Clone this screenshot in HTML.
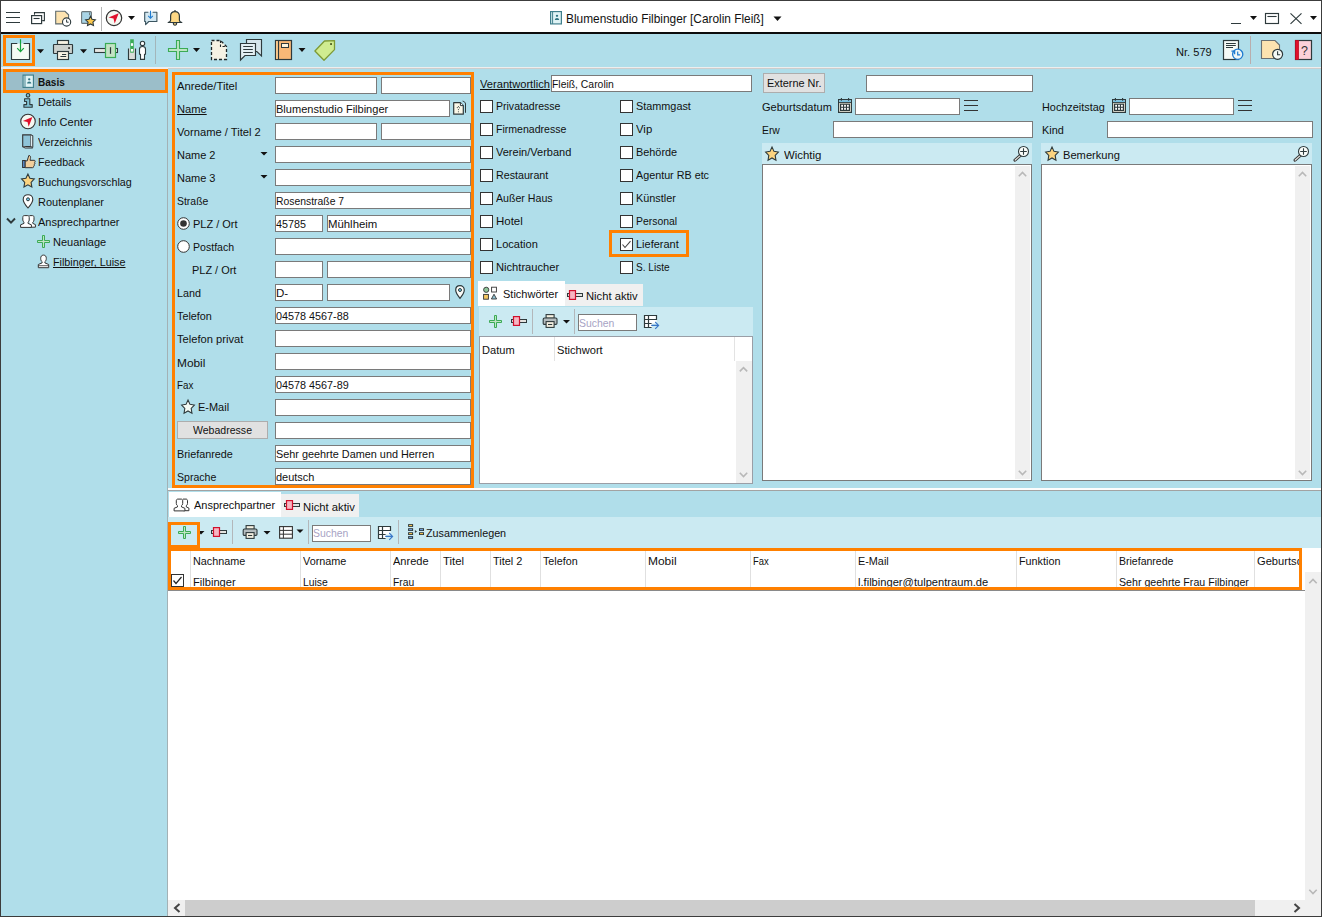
<!DOCTYPE html>
<html lang="de"><head><meta charset="utf-8"><title>Blumenstudio Filbinger</title>
<style>
html,body{margin:0;padding:0;background:#B0DEEA;}
body{width:1322px;height:917px;position:relative;overflow:hidden;font-family:"Liberation Sans",sans-serif;}
.a{position:absolute;box-sizing:content-box;}
.t{position:absolute;white-space:nowrap;line-height:14px;transform-origin:0 50%;}
svg{overflow:visible;}
</style></head><body>
<div class="a" style="left:0;top:0;width:1322px;height:917px;background:#B0DEEA"></div>
<div class="a" style="left:0px;top:0px;width:1322px;height:34px;background:#fff;"></div>
<div class="a" style="left:0px;top:32px;width:1322px;height:2px;background:#0c0c0c;"></div>
<div class="a" style="left:1px;top:67px;width:1320px;height:1px;background:#eeeeee;"></div>
<div class="a" style="left:1px;top:68px;width:167px;height:1px;background:#eeeeee;"></div>
<div class="a" style="left:168px;top:68px;width:1153px;height:1px;background:#cdcdcd;"></div>
<div class="a" style="left:167px;top:93px;width:1px;height:823px;background:#a3b1b5;"></div>
<svg class="a" style="left:6px;top:11px" width="14" height="13"><g transform="translate(0 0.5)"><path d="M0 1H14M0 6H14M0 11H14" stroke="#2e3a3c" stroke-width="1.2"/></g></svg>
<svg class="a" style="left:31px;top:11px" width="15" height="14"><path d="M3.5 3.2V1.6H13.4V9.6H11.6" fill="none" stroke="#2e3a3c" stroke-width="1.1" stroke-linecap="round"/><rect x=".6" y="4.6" width="10" height="8" fill="#fff" stroke="#2e3a3c" stroke-width="1.2"/><path d="M2.6 7.5H8.6" stroke="#2e3a3c" stroke-width="1.1"/></svg>
<svg class="a" style="left:55px;top:10px" width="17" height="17"><g transform="translate(0 0.6)"><path d="M.7 .7H10L13.6 4.2V13.3H.7Z" fill="#fde3b0" stroke="#5d6a6d" stroke-width="1.1"/><circle cx="11.6" cy="11.4" r="4.1" fill="#fff" stroke="#2e3a3c" stroke-width="1.1"/><path d="M11.6 9V11.6H13.6" fill="none" stroke="#2e3a3c" stroke-width="1"/></g></svg>
<svg class="a" style="left:80px;top:10px" width="17" height="17"><rect x="1.6" y="1.6" width="9.8" height="11.8" rx="1" fill="#a8d4e6" stroke="#6a7578" stroke-width="1.1"/><path d="M9.6 2.4V5.2" stroke="#6a7578" stroke-width="1"/></svg>
<svg class="a" style="left:82px;top:13px" width="17" height="18"><g transform="translate(0.5 0.4)"><path d="M8.00 2.90L9.50 5.94L12.85 6.42L10.43 8.79L11.00 12.13L8.00 10.55L5.00 12.13L5.57 8.79L3.15 6.42L6.50 5.94Z" fill="#fcc84e" stroke="#2e3a3c" stroke-width="1.1" stroke-linejoin="miter"/></g></svg>
<div class="a" style="left:101px;top:7px;width:1px;height:24px;background:#b4b4b4;"></div>
<svg class="a" style="left:105px;top:9px" width="18" height="18"><g transform="translate(0.5 0.5) scale(1.0000 1.0000)"><circle cx="8.5" cy="8.5" r="7.7" fill="#f6f8f2" stroke="#333" stroke-width="1.2"/><path d="M13.2 3.8L3 8L8 9.1L9.2 14Z" fill="#e0102c"/></g></svg>
<svg class="a" style="left:128px;top:16px" width="7" height="4"><path d="M0 0H7L3.5 4Z" fill="#111"/></svg>
<svg class="a" style="left:144px;top:10px" width="14" height="16"><g transform="translate(0 0.5)"><path d="M4.4 1.7H.7V11H1.6V14.2L4.8 11H12.9V1.7H8.6" fill="#d4e8f1" stroke="#3b5560" stroke-width="1.1" stroke-linejoin="round"/><path d="M6.5 .3V7.6M4.2 5.4L6.5 7.8L8.8 5.4" fill="none" stroke="#1f7bd0" stroke-width="1.1"/></g></svg>
<svg class="a" style="left:167px;top:9px" width="16" height="18"><circle cx="8" cy="1.7" r=".8" fill="#2e3a3c"/><path d="M6.3 13.8C6.3 17 9.7 17 9.7 13.8Z" fill="#fdd884" stroke="#2e3a3c" stroke-width="1.1"/><path d="M8 2.6C5 2.6 3.6 4.6 3.6 7V11.2C3.6 12.4 2.6 13 1.2 13.5H14.8C13.4 13 12.4 12.4 12.4 11.2V7C12.4 4.6 11 2.6 8 2.6Z" fill="#fdd884" stroke="#2e3a3c" stroke-width="1.2" stroke-linejoin="round"/></svg>
<svg class="a" style="left:550px;top:11px" width="12" height="14"><g transform="translate(0 0) scale(1.0000 0.9643)"><rect x=".6" y=".6" width="10.8" height="12.8" fill="#dff3f5" stroke="#3f7f8c" stroke-width="1.2"/><path d="M2.6 .6V13.4" stroke="#3f7f8c" stroke-width="1"/><circle cx="7" cy="5" r="1.2" fill="#2f7380"/><path d="M4.8 9.4C4.8 6.6 9.2 6.6 9.2 9.4Z" fill="#2f7380"/></g></svg>
<div class="t" style="left:565.9px;top:12px;font-size:13px;color:#111;transform:scaleX(0.9130);">Blumenstudio Filbinger [Carolin Fleiß]</div>
<svg class="a" style="left:773px;top:16px" width="9" height="5"><g transform="translate(0.5 0.5)"><path d="M0 0H8L4.0 4.5Z" fill="#111"/></g></svg>
<div class="a" style="left:1231px;top:23px;width:10px;height:1px;background:#2e3a3c;"></div>
<svg class="a" style="left:1250px;top:16px" width="7" height="4"><path d="M0 0H7L3.5 4Z" fill="#111"/></svg>
<svg class="a" style="left:1265px;top:13px" width="14" height="11"><rect x=".5" y=".5" width="13" height="10" fill="none" stroke="#2e3a3c" stroke-width="1.15"/><path d="M2.4 3.5H11.6" stroke="#2e3a3c" stroke-width="1.1"/></svg>
<svg class="a" style="left:1290px;top:13px" width="12" height="11"><path d="M.5 .3L11.5 10.8M11.5 .3L.5 10.8" stroke="#2e3a3c" stroke-width="1.15"/></svg>
<svg class="a" style="left:1310px;top:16px" width="7" height="4"><path d="M0 0H7L3.5 4Z" fill="#111"/></svg>
<div class="a" style="left:3px;top:35px;width:26px;height:25px;border:3px solid #FF8000;"></div>
<svg class="a" style="left:11px;top:39px" width="20" height="21"><path d="M6.3 4.5H.5V20.5H18.5V4.5H12.6" fill="#f4faf4" stroke="#2e3a3c" stroke-width="1.15"/><path d="M9.5 .2V12.4M6.2 9.2L9.5 12.7L12.8 9.2" fill="none" stroke="#14a23a" stroke-width="1.2"/></svg>
<svg class="a" style="left:37px;top:49px" width="7" height="5"><g transform="translate(0 0.2)"><path d="M0 0H7L3.5 4Z" fill="#111"/></g></svg>
<svg class="a" style="left:53px;top:40px" width="20" height="20"><rect x="4.5" y=".5" width="11" height="4" fill="#f7f3e3" stroke="#2e3a3c" stroke-width="1.15"/><rect x=".5" y="4.5" width="19" height="9" rx=".5" fill="#ccd2ce" stroke="#2e3a3c" stroke-width="1.15"/><rect x="4.5" y="11.5" width="11" height="8" fill="#f7f3e3" stroke="#2e3a3c" stroke-width="1.15"/><path d="M9 14.5H13.2M7.4 16.5H13.2" stroke="#2e3a3c" stroke-width="1.1"/><rect x="15.2" y="7.2" width="1.7" height="1.7" fill="#222"/></svg>
<svg class="a" style="left:80px;top:49px" width="7" height="5"><g transform="translate(0 0.2)"><path d="M0 0H7L3.5 4Z" fill="#111"/></g></svg>
<svg class="a" style="left:94px;top:43px" width="24" height="15"><rect x=".5" y="5.5" width="23" height="4" fill="#e6e6e2" stroke="#2e3a3c" stroke-width="1.1"/><rect x="11.5" y=".5" width="10" height="14" fill="#c3e3c3" stroke="#3bab55" stroke-width="1.2"/><path d="M16.5 4.2V10.8" stroke="#2e3a3c" stroke-width="1.2"/></svg>
<svg class="a" style="left:128px;top:39px" width="19" height="21"><path d="M.5 9.5V20.5H7.5V9.5" fill="#d8dcd8" stroke="#2e3a3c" stroke-width="1.15"/><rect x="2.2" y=".3" width="3.6" height="13.4" fill="#3bab55"/><rect x="2.9" y="4.2" width="2.2" height="2.7" fill="#fff"/><rect x="2.9" y="10" width="2.2" height="2.6" fill="#fff"/><circle cx="14.5" cy="4.4" r="2.2" fill="#fff" stroke="#2e3a3c" stroke-width="1.1"/><path d="M11.5 10C11.5 6.6 17.5 6.6 17.5 10V15.2H16.5V20.4H12.5V15.2H11.5Z" fill="#fff" stroke="#2e3a3c" stroke-width="1.1" stroke-linejoin="round"/></svg>
<div class="a" style="left:155px;top:36px;width:1px;height:28px;background:#a3b6ba;"></div>
<svg class="a" style="left:168px;top:40px" width="20" height="20"><path d="M8.5 .5H11.5V8.5H19.5V11.5H11.5V19.5H8.5V11.5H.5V8.5H8.5Z" fill="#bfe5c4" stroke="#3bab55" stroke-width="1.1"/></svg>
<svg class="a" style="left:193px;top:48px" width="7" height="4"><path d="M0 0H7L3.5 4Z" fill="#111"/></svg>
<svg class="a" style="left:211px;top:40px" width="17" height="21"><path d="M.5 .5H9.5L15.5 6.5V19.5H.5Z" fill="#f6f2e4" stroke="#1e2628" stroke-width="1.3" stroke-dasharray="3 2"/><path d="M9.5 .5V6.5H15.5" fill="none" stroke="#1e2628" stroke-width="1.1" stroke-dasharray="2.4 1.6"/></svg>
<svg class="a" style="left:240px;top:39px" width="23" height="22"><path d="M6.5 4.5V.5H21.5V17L16.8 12.5H15.5" fill="#d6e6ec" stroke="#2e3a3c" stroke-width="1.15" stroke-linejoin="miter"/><path d="M.5 4.5H15.5V16.5H5L.5 21Z" fill="#e4f0f4" stroke="#2e3a3c" stroke-width="1.15" stroke-linejoin="miter"/><path d="M3.2 7.5H12.8M3.2 10.5H12.8M3.2 13.5H12.8" stroke="#2e3a3c" stroke-width="1.1"/></svg>
<svg class="a" style="left:275px;top:40px" width="18" height="21"><rect x=".5" y=".5" width="16" height="19" fill="#f8b877" stroke="#2e3a3c" stroke-width="1.2"/><rect x="1.1" y="1.1" width="2" height="17.8" fill="#fbc98c"/><path d="M3.5 .5V19.5" stroke="#2e3a3c" stroke-width="1.1"/><rect x="6.5" y="3.5" width="7" height="4" fill="#fbf3dc" stroke="#2e3a3c" stroke-width="1"/></svg>
<svg class="a" style="left:298px;top:48px" width="8" height="4"><g transform="translate(0.5 0)"><path d="M0 0H7L3.5 4Z" fill="#111"/></g></svg>
<svg class="a" style="left:314px;top:40px" width="22" height="21"><path d="M10.5 1L20.5 .6V9.6L10 20.3L.9 11Z" fill="#d0ec90" stroke="#7d9a34" stroke-width="1.3" stroke-linejoin="round"/><rect x="16.1" y="3.1" width="1.9" height="1.9" fill="#55652a"/></svg>
<div class="t" style="left:1175.9px;top:45px;font-size:11.5px;color:#111;transform:scaleX(0.9628);">Nr. 579</div>
<svg class="a" style="left:1223px;top:40px" width="21" height="21"><rect x=".5" y=".5" width="15" height="19" fill="#f6faf6" stroke="#2e3a3c" stroke-width="1.2"/><path d="M3 3.5H12.8M3 5.5H12.8M3 7.5H10" stroke="#2e3a3c" stroke-width="1.1"/><circle cx="14.7" cy="14.3" r="5.1" fill="#eef6f6" stroke="#1f7bd0" stroke-width="1.3"/><path d="M14.7 11.4V14.8H17.2" fill="none" stroke="#1f7bd0" stroke-width="1.2"/><path d="M8.4 11.2H11.6V14.2" fill="none" stroke="#1f7bd0" stroke-width="1.3"/></svg>
<div class="a" style="left:1250px;top:36px;width:1px;height:28px;background:#b9adad;"></div>
<svg class="a" style="left:1261px;top:40px" width="23" height="20"><path d="M.5 .5H14L18.5 5V18.5H.5Z" fill="#fde3b0" stroke="#6a7072" stroke-width="1.1"/><circle cx="16.6" cy="14.3" r="5" fill="#f6faf6" stroke="#2e3a3c" stroke-width="1.2"/><path d="M16.6 11.3V14.8H19.2" fill="none" stroke="#2e3a3c" stroke-width="1.1"/></svg>
<svg class="a" style="left:1295px;top:40px" width="18" height="21"><rect x=".5" y=".5" width="16" height="19" fill="#fcd0d8" stroke="#2e3a3c" stroke-width="1.2"/><rect x=".5" y=".5" width="3" height="19" fill="#e0102c" stroke="#c00c24" stroke-width=".8"/></svg>
<div class="t" style="left:1301.3px;top:44px;font-size:13.5px;color:#333;transform:scaleX(0.9200);">?</div>
<div class="a" style="left:3px;top:69px;width:159px;height:18px;border:3px solid #FF8000;"></div>
<div class="a" style="left:6px;top:72px;width:159px;height:18px;background:#9BBEC9;"></div>
<svg class="a" style="left:22px;top:74px" width="12" height="14"><g transform="translate(0.5 0.5) scale(0.9583 0.9643)"><rect x=".6" y=".6" width="10.8" height="12.8" fill="#dff3f5" stroke="#3f7f8c" stroke-width="1.2"/><path d="M2.6 .6V13.4" stroke="#3f7f8c" stroke-width="1"/><circle cx="7" cy="5" r="1.2" fill="#2f7380"/><path d="M4.8 9.4C4.8 6.6 9.2 6.6 9.2 9.4Z" fill="#2f7380"/></g></svg>
<div class="t" style="left:37.7px;top:75px;font-size:11.5px;color:#111;transform:scaleX(0.8733);font-weight:bold;">Basis</div>
<div class="t" style="left:37.7px;top:95px;font-size:11.5px;color:#111;transform:scaleX(0.9529);">Details</div>
<div class="t" style="left:37.7px;top:115px;font-size:11.5px;color:#111;transform:scaleX(0.9647);">Info Center</div>
<div class="t" style="left:37.7px;top:135px;font-size:11.5px;color:#111;transform:scaleX(0.9216);">Verzeichnis</div>
<div class="t" style="left:37.7px;top:155px;font-size:11.5px;color:#111;transform:scaleX(0.9225);">Feedback</div>
<div class="t" style="left:37.7px;top:175px;font-size:11.5px;color:#111;transform:scaleX(0.9345);">Buchungsvorschlag</div>
<div class="t" style="left:37.7px;top:195px;font-size:11.5px;color:#111;transform:scaleX(0.9542);">Routenplaner</div>
<div class="t" style="left:37.7px;top:215px;font-size:11.5px;color:#111;transform:scaleX(0.9585);">Ansprechpartner</div>
<svg class="a" style="left:23px;top:93px" width="10" height="15"><circle cx="5" cy="2.3" r="1.8" fill="#7fc3d4" stroke="#2e3a3c" stroke-width="1.1"/><path d="M1.6 5.8H6.8V11.6H9.2V14.3H.9V11.6H3.6V8.5H1.6Z" fill="#7fc3d4" stroke="#2e3a3c" stroke-width="1.1" stroke-linejoin="round"/></svg>
<svg class="a" style="left:20px;top:113px" width="16" height="17"><g transform="translate(0 0.5) scale(0.9412 0.9412)"><circle cx="8.5" cy="8.5" r="7.7" fill="#f6f8f2" stroke="#333" stroke-width="1.2"/><path d="M13.2 3.8L3 8L8 9.1L9.2 14Z" fill="#e0102c"/></g></svg>
<svg class="a" style="left:22px;top:134px" width="12" height="15"><path d="M.7 .9H8.8V12.6H.7Z" fill="#8fc4d8" stroke="#333" stroke-width="1.1"/><path d="M8.8 .9L10.8 1.6V13.4L8.8 12.6M.7 12.6L3 14H10.8" fill="#dfeef2" stroke="#333" stroke-width="1" stroke-linejoin="round"/></svg>
<svg class="a" style="left:22px;top:154px" width="14" height="15"><g transform="translate(0 0.5)"><rect x=".6" y="6" width="2.6" height="7" fill="#5b8fd0" stroke="#333" stroke-width="1"/><path d="M3.2 6.4H5.2L6.8 1C8.6 1 8.8 2.4 8.4 4L8 5.8H12.2C13.4 5.8 13.4 7.4 12.6 7.8C13.2 8.6 13 9.6 12.2 9.8C12.6 10.8 12.2 11.6 11.6 11.8C11.8 12.6 11.4 13.2 10.4 13.2H3.2Z" fill="#f2cf9c" stroke="#333" stroke-width="1" stroke-linejoin="round"/></g></svg>
<svg class="a" style="left:19px;top:173px" width="17" height="18"><g transform="translate(0.9 0.2)"><path d="M8.00 0.76L9.97 5.07L14.37 5.76L11.19 9.12L11.94 13.85L8.00 11.62L4.06 13.85L4.81 9.12L1.63 5.76L6.03 5.07Z" fill="#fcd480" stroke="#2e3a3c" stroke-width="1.1" stroke-linejoin="miter"/></g></svg>
<svg class="a" style="left:22px;top:194px" width="12" height="15"><g transform="translate(0.5 0)"><path d="M5.5 14C2.4 10.4 .7 8 .7 5.4C.7 2.6 2.8 .7 5.5 .7C8.2 .7 10.3 2.6 10.3 5.4C10.3 8 8.6 10.4 5.5 14Z" fill="#fff" stroke="#333" stroke-width="1.1"/><circle cx="5.5" cy="5.3" r="1.5" fill="#6fcff0" stroke="#2e3a3c" stroke-width="1"/></g></svg>
<svg class="a" style="left:6px;top:217px" width="10" height="8"><g transform="translate(0 0.5)"><path d="M1 1L5 5.2L9 1" fill="none" stroke="#2e3a3c" stroke-width="1.9"/></g></svg>
<svg class="a" style="left:20px;top:215px" width="16" height="13"><path d="M9.4 .6H12.6C13.6 .6 14 1.4 14 2.4V5C14 6.2 13.4 6.8 12.8 7.2V8.4L15.4 9.6V12.2H9.8" fill="#fff" stroke="#333" stroke-width="1" stroke-linejoin="round"/><path d="M4.2 .6H7.8C8.8 .6 9.2 1.4 9.2 2.4V5C9.2 6.2 8.6 6.8 8 7.2V8.4L11.4 9.8V12.4H.6V9.8L4 8.4V7.2C3.4 6.8 2.8 6.2 2.8 5V2.4C2.8 1.4 3.2 .6 4.2 .6Z" fill="#fff" stroke="#333" stroke-width="1" stroke-linejoin="round"/></svg>
<svg class="a" style="left:37px;top:235px" width="13" height="13"><path d="M5.5 .5H7.5V5.5H12.5V7.5H7.5V12.5H5.5V7.5H.5V5.5H5.5Z" fill="#bfe5c4" stroke="#3bab55" stroke-width="1"/></svg>
<div class="t" style="left:52.7px;top:235px;font-size:11.5px;color:#111;transform:scaleX(0.9561);">Neuanlage</div>
<svg class="a" style="left:37px;top:254px" width="13" height="15"><g transform="translate(0.5 0.5)"><path d="M6 .6C3.8 .6 3.2 2.2 3.2 4C3.2 5.6 3.8 6.6 4.6 7.2V8.4L.8 10V13.2H11.2V10L7.4 8.4V7.2C8.2 6.6 8.8 5.6 8.8 4C8.8 2.2 8.2 .6 6 .6Z" fill="#fff" stroke="#333" stroke-width="1" stroke-linejoin="round"/><path d="M.8 11.2H11.2" stroke="#333" stroke-width=".8"/></g></svg>
<div class="t" style="left:52.7px;top:255px;font-size:11.5px;color:#111;transform:scaleX(0.9372);text-decoration:underline;">Filbinger, Luise</div>
<div class="a" style="left:172px;top:72px;width:296px;height:410px;border:3px solid #FF8000;"></div>
<div class="t" style="left:176.5px;top:79px;font-size:11.5px;color:#111;transform:scaleX(0.9792);">Anrede/Titel</div>
<div class="t" style="left:176.5px;top:102px;font-size:11.5px;color:#111;transform:scaleX(0.9678);text-decoration:underline;">Name</div>
<div class="t" style="left:176.5px;top:125px;font-size:11.5px;color:#111;transform:scaleX(0.9711);">Vorname / Titel 2</div>
<div class="t" style="left:176.5px;top:148px;font-size:11.5px;color:#111;transform:scaleX(0.9558);">Name 2</div>
<div class="t" style="left:176.5px;top:171px;font-size:11.5px;color:#111;transform:scaleX(0.9558);">Name 3</div>
<div class="t" style="left:176.5px;top:194px;font-size:11.5px;color:#111;transform:scaleX(0.9068);">Straße</div>
<div class="t" style="left:176.5px;top:286px;font-size:11.5px;color:#111;transform:scaleX(0.9377);">Land</div>
<div class="t" style="left:176.5px;top:309px;font-size:11.5px;color:#111;transform:scaleX(0.9409);">Telefon</div>
<div class="t" style="left:176.5px;top:332px;font-size:11.5px;color:#111;transform:scaleX(0.9707);">Telefon privat</div>
<div class="t" style="left:176.5px;top:356px;font-size:11.5px;color:#111;transform:scaleX(1.0333);">Mobil</div>
<div class="t" style="left:176.5px;top:378px;font-size:11.5px;color:#111;transform:scaleX(0.8502);">Fax</div>
<div class="t" style="left:176.5px;top:447px;font-size:11.5px;color:#111;transform:scaleX(0.9400);">Briefanrede</div>
<div class="t" style="left:176.5px;top:470px;font-size:11.5px;color:#111;transform:scaleX(0.9173);">Sprache</div>
<div class="a" style="left:275px;top:77px;width:100px;height:15px;background:#fff;border:1px solid #7a7a7a;"></div>
<div class="a" style="left:381px;top:77px;width:88px;height:15px;background:#fff;border:1px solid #7a7a7a;"></div>
<div class="a" style="left:275px;top:100px;width:173px;height:15px;background:#fff;border:1px solid #7a7a7a;"></div>
<div class="t" style="left:275.9px;top:102px;font-size:11.5px;color:#111;transform:scaleX(0.9591);">Blumenstudio Filbinger</div>
<svg class="a" style="left:453px;top:102px" width="14" height="14"><path d="M10 -.8C11.6 -.4 12.5 .6 12.5 2V10.4" fill="none" stroke="#2e3a3c" stroke-width="1" stroke-linecap="round"/><path d="M.7 .7H7.4L10.3 3.6V12.2H.7Z" fill="#fbf8e8" stroke="#2e3a3c" stroke-width="1.2" stroke-linejoin="round"/><path d="M7.4 .7V3.6H10.3" fill="#fff" stroke="#2e3a3c" stroke-width="1"/><g fill="#2e3a3c"><circle cx="5.4" cy="4.6" r=".55"/><circle cx="4.3" cy="5.6" r=".55"/><circle cx="6.5" cy="5.7" r=".55"/><circle cx="5.4" cy="7.6" r=".55"/><circle cx="5.4" cy="9.7" r=".55"/></g></svg>
<div class="a" style="left:275px;top:123px;width:100px;height:15px;background:#fff;border:1px solid #7a7a7a;"></div>
<div class="a" style="left:381px;top:123px;width:88px;height:15px;background:#fff;border:1px solid #7a7a7a;"></div>
<div class="a" style="left:275px;top:146px;width:194px;height:15px;background:#fff;border:1px solid #7a7a7a;"></div>
<svg class="a" style="left:260px;top:152px" width="8" height="4"><g transform="translate(0.5 0)"><path d="M0 0H7L3.5 3.5Z" fill="#111"/></g></svg>
<div class="a" style="left:275px;top:169px;width:194px;height:15px;background:#fff;border:1px solid #7a7a7a;"></div>
<svg class="a" style="left:260px;top:175px" width="8" height="4"><g transform="translate(0.5 0)"><path d="M0 0H7L3.5 3.5Z" fill="#111"/></g></svg>
<div class="a" style="left:275px;top:192px;width:194px;height:15px;background:#fff;border:1px solid #7a7a7a;"></div>
<div class="t" style="left:275.9px;top:194px;font-size:11.5px;color:#111;transform:scaleX(0.9027);">Rosenstraße 7</div>
<svg class="a" style="left:177px;top:217px" width="13" height="13"><circle cx="6.5" cy="6.5" r="5.8" fill="#fff" stroke="#333" stroke-width="1"/><circle cx="6.5" cy="6.5" r="3.3" fill="#333"/></svg>
<div class="t" style="left:192.8px;top:217px;font-size:11.5px;color:#111;transform:scaleX(0.9538);">PLZ / Ort</div>
<div class="a" style="left:275px;top:215px;width:46px;height:15px;background:#fff;border:1px solid #7a7a7a;"></div>
<div class="t" style="left:275.9px;top:217px;font-size:11.5px;color:#111;transform:scaleX(0.9348);">45785</div>
<div class="a" style="left:327px;top:215px;width:142px;height:15px;background:#fff;border:1px solid #7a7a7a;"></div>
<div class="t" style="left:327.9px;top:217px;font-size:11.5px;color:#111;transform:scaleX(0.9888);">Mühlheim</div>
<svg class="a" style="left:177px;top:240px" width="13" height="13"><circle cx="6.5" cy="6.5" r="5.8" fill="#fff" stroke="#333" stroke-width="1"/></svg>
<div class="t" style="left:192.8px;top:240px;font-size:11.5px;color:#111;transform:scaleX(0.9184);">Postfach</div>
<div class="a" style="left:275px;top:238px;width:194px;height:15px;background:#fff;border:1px solid #7a7a7a;"></div>
<div class="t" style="left:191.9px;top:263px;font-size:11.5px;color:#111;transform:scaleX(0.9516);">PLZ / Ort</div>
<div class="a" style="left:275px;top:261px;width:46px;height:15px;background:#fff;border:1px solid #7a7a7a;"></div>
<div class="a" style="left:327px;top:261px;width:142px;height:15px;background:#fff;border:1px solid #7a7a7a;"></div>
<div class="a" style="left:275px;top:284px;width:46px;height:15px;background:#fff;border:1px solid #7a7a7a;"></div>
<div class="t" style="left:275.9px;top:286px;font-size:11.5px;color:#111;transform:scaleX(1.0049);">D-</div>
<div class="a" style="left:327px;top:284px;width:121px;height:15px;background:#fff;border:1px solid #7a7a7a;"></div>
<svg class="a" style="left:455px;top:285px" width="10" height="14"><path d="M5 13.3C2.2 10 .7 7.8 .7 5.1C.7 2.4 2.6 .7 5 .7C7.4 .7 9.3 2.4 9.3 5.1C9.3 7.8 7.8 10 5 13.3Z" fill="#fafcf8" stroke="#2e3a3c" stroke-width="1.2"/><circle cx="5" cy="5" r="1.5" fill="#6fcff0" stroke="#2e3a3c" stroke-width="1"/></svg>
<div class="a" style="left:275px;top:307px;width:194px;height:15px;background:#fff;border:1px solid #7a7a7a;"></div>
<div class="t" style="left:275.9px;top:309px;font-size:11.5px;color:#111;transform:scaleX(0.9394);">04578 4567-88</div>
<div class="a" style="left:275px;top:330px;width:194px;height:15px;background:#fff;border:1px solid #7a7a7a;"></div>
<div class="a" style="left:275px;top:353px;width:194px;height:15px;background:#fff;border:1px solid #7a7a7a;"></div>
<div class="a" style="left:275px;top:376px;width:194px;height:15px;background:#fff;border:1px solid #7a7a7a;"></div>
<div class="t" style="left:275.9px;top:378px;font-size:11.5px;color:#111;transform:scaleX(0.9394);">04578 4567-89</div>
<svg class="a" style="left:180px;top:399px" width="16" height="18"><g transform="translate(0 0.3)"><path d="M8.00 0.76L9.97 5.07L14.37 5.76L11.19 9.12L11.94 13.85L8.00 11.62L4.06 13.85L4.81 9.12L1.63 5.76L6.03 5.07Z" fill="#f4faf4" stroke="#2e3a3c" stroke-width="1.1" stroke-linejoin="miter"/></g></svg>
<div class="t" style="left:197.7px;top:400px;font-size:11.5px;color:#111;transform:scaleX(0.9542);">E-Mail</div>
<div class="a" style="left:275px;top:399px;width:194px;height:15px;background:#fff;border:1px solid #7a7a7a;"></div>
<div class="a" style="left:177px;top:421px;width:89px;height:16px;background:#e1e1e1;border:1px solid #adadad;"></div>
<div class="t" style="left:193.1px;top:423px;font-size:11.5px;color:#111;transform:scaleX(0.9167);">Webadresse</div>
<div class="a" style="left:275px;top:422px;width:194px;height:15px;background:#fff;border:1px solid #7a7a7a;"></div>
<div class="a" style="left:275px;top:445px;width:194px;height:15px;background:#fff;border:1px solid #7a7a7a;"></div>
<div class="t" style="left:275.9px;top:447px;font-size:11.5px;color:#111;transform:scaleX(0.9445);">Sehr geehrte Damen und Herren</div>
<div class="a" style="left:275px;top:468px;width:194px;height:15px;background:#fff;border:1px solid #7a7a7a;"></div>
<div class="t" style="left:275.9px;top:470px;font-size:11.5px;color:#111;transform:scaleX(0.9533);">deutsch</div>
<div class="t" style="left:479.7px;top:77px;font-size:11.5px;color:#111;transform:scaleX(0.9677);text-decoration:underline;">Verantwortlich</div>
<div class="a" style="left:551px;top:75px;width:199px;height:15px;background:#fff;border:1px solid #7a7a7a;"></div>
<div class="t" style="left:552.1px;top:77px;font-size:11.5px;color:#111;transform:scaleX(0.9036);">Fleiß, Carolin</div>
<div class="a" style="left:480px;top:100px;width:11px;height:11px;background:#fff;border:1px solid #333;"></div>
<div class="t" style="left:495.6px;top:99px;font-size:11.5px;color:#111;transform:scaleX(0.9159);">Privatadresse</div>
<div class="a" style="left:620px;top:100px;width:11px;height:11px;background:#fff;border:1px solid #333;"></div>
<div class="t" style="left:635.8px;top:99px;font-size:11.5px;color:#111;transform:scaleX(0.9438);">Stammgast</div>
<div class="a" style="left:480px;top:123px;width:11px;height:11px;background:#fff;border:1px solid #333;"></div>
<div class="t" style="left:495.6px;top:122px;font-size:11.5px;color:#111;transform:scaleX(0.9178);">Firmenadresse</div>
<div class="a" style="left:620px;top:123px;width:11px;height:11px;background:#fff;border:1px solid #333;"></div>
<div class="t" style="left:635.8px;top:122px;font-size:11.5px;color:#111;transform:scaleX(0.9865);">Vip</div>
<div class="a" style="left:480px;top:146px;width:11px;height:11px;background:#fff;border:1px solid #333;"></div>
<div class="t" style="left:495.6px;top:145px;font-size:11.5px;color:#111;transform:scaleX(0.9573);">Verein/Verband</div>
<div class="a" style="left:620px;top:146px;width:11px;height:11px;background:#fff;border:1px solid #333;"></div>
<div class="t" style="left:635.8px;top:145px;font-size:11.5px;color:#111;transform:scaleX(0.9452);">Behörde</div>
<div class="a" style="left:480px;top:169px;width:11px;height:11px;background:#fff;border:1px solid #333;"></div>
<div class="t" style="left:495.6px;top:168px;font-size:11.5px;color:#111;transform:scaleX(0.9295);">Restaurant</div>
<div class="a" style="left:620px;top:169px;width:11px;height:11px;background:#fff;border:1px solid #333;"></div>
<div class="t" style="left:635.8px;top:168px;font-size:11.5px;color:#111;transform:scaleX(0.9361);">Agentur RB etc</div>
<div class="a" style="left:480px;top:192px;width:11px;height:11px;background:#fff;border:1px solid #333;"></div>
<div class="t" style="left:495.6px;top:191px;font-size:11.5px;color:#111;transform:scaleX(0.9224);">Außer Haus</div>
<div class="a" style="left:620px;top:192px;width:11px;height:11px;background:#fff;border:1px solid #333;"></div>
<div class="t" style="left:635.8px;top:191px;font-size:11.5px;color:#111;transform:scaleX(0.9458);">Künstler</div>
<div class="a" style="left:480px;top:215px;width:11px;height:11px;background:#fff;border:1px solid #333;"></div>
<div class="t" style="left:495.6px;top:214px;font-size:11.5px;color:#111;transform:scaleX(0.9978);">Hotel</div>
<div class="a" style="left:620px;top:215px;width:11px;height:11px;background:#fff;border:1px solid #333;"></div>
<div class="t" style="left:635.8px;top:214px;font-size:11.5px;color:#111;transform:scaleX(0.9055);">Personal</div>
<div class="a" style="left:480px;top:238px;width:11px;height:11px;background:#fff;border:1px solid #333;"></div>
<div class="t" style="left:495.6px;top:237px;font-size:11.5px;color:#111;transform:scaleX(0.9613);">Location</div>
<div class="a" style="left:620px;top:238px;width:11px;height:11px;background:#fff;border:1px solid #333;"></div>
<svg class="a" style="left:620px;top:238px" width="13" height="13"><path d="M2.5 6.5L5 9.5L10.5 3.2" fill="none" stroke="#444" stroke-width="1.1"/></svg>
<div class="t" style="left:635.8px;top:237px;font-size:11.5px;color:#111;transform:scaleX(0.9561);">Lieferant</div>
<div class="a" style="left:480px;top:261px;width:11px;height:11px;background:#fff;border:1px solid #333;"></div>
<div class="t" style="left:495.6px;top:260px;font-size:11.5px;color:#111;transform:scaleX(0.9693);">Nichtraucher</div>
<div class="a" style="left:620px;top:261px;width:11px;height:11px;background:#fff;border:1px solid #333;"></div>
<div class="t" style="left:635.8px;top:260px;font-size:11.5px;color:#111;transform:scaleX(0.8759);">S. Liste</div>
<div class="a" style="left:609px;top:230px;width:74px;height:21px;border:3px solid #FF8000;"></div>
<div class="a" style="left:478px;top:281px;width:87px;height:25px;background:#fff;"></div>
<div class="a" style="left:565px;top:284px;width:78px;height:22px;background:#f0f0f0;"></div>
<svg class="a" style="left:483px;top:286px" width="14" height="14"><g transform="translate(0 0.6)"><circle cx="3.2" cy="3.2" r="2.6" fill="#8fc79a" stroke="#333" stroke-width=".9"/><rect x="8.6" y=".6" width="4.8" height="4.8" fill="#fff" stroke="#333" stroke-width=".9"/><rect x=".6" y="7.8" width="4.8" height="4.8" fill="#f6c862" stroke="#333" stroke-width=".9"/><path d="M11 7.6L13.6 12.4H8.4Z" fill="#8fc3d4" stroke="#333" stroke-width=".9"/></g></svg>
<div class="t" style="left:502.9px;top:287px;font-size:11.5px;color:#111;transform:scaleX(0.9577);">Stichwörter</div>
<svg class="a" style="left:567px;top:290px" width="16" height="10"><rect x=".5" y="3.5" width="15" height="3" fill="#e4e4e0" stroke="#2e3a3c" stroke-width="1"/><rect x="2.5" y=".6" width="6" height="8.8" fill="#f7b6c2" stroke="#d0102c" stroke-width="1.2"/></svg>
<div class="t" style="left:586.2px;top:289px;font-size:11.5px;color:#111;transform:scaleX(0.9746);">Nicht aktiv</div>
<div class="a" style="left:479px;top:307px;width:274px;height:29px;background:#CBEAF2;"></div>
<svg class="a" style="left:489px;top:315px" width="13" height="13"><path d="M5.5 .5H7.5V5.5H12.5V7.5H7.5V12.5H5.5V7.5H.5V5.5H5.5Z" fill="#bfe5c4" stroke="#3bab55" stroke-width="1"/></svg>
<svg class="a" style="left:511px;top:316px" width="16" height="10"><rect x=".5" y="3.5" width="15" height="3" fill="#e4e4e0" stroke="#2e3a3c" stroke-width="1"/><rect x="2.5" y=".6" width="6" height="8.8" fill="#f7b6c2" stroke="#d0102c" stroke-width="1.2"/></svg>
<div class="a" style="left:532px;top:309px;width:1px;height:25px;background:#b3b7ba;"></div>
<svg class="a" style="left:542px;top:314px" width="16" height="14"><g transform="translate(0.6 0)"><rect x="3.5" y=".6" width="8" height="3.6" fill="#f7f3e3" stroke="#2e3a3c" stroke-width="1.1"/><rect x=".6" y="4" width="13.8" height="6.4" rx="1.2" fill="#b4bcbe" stroke="#2e3a3c" stroke-width="1.1"/><rect x="3.5" y="7.6" width="8" height="5.8" fill="#f7f3e3" stroke="#2e3a3c" stroke-width="1.1"/><path d="M5.4 10.5H9.6" stroke="#2e3a3c" stroke-width="1.1"/></g></svg>
<svg class="a" style="left:563px;top:320px" width="7" height="4"><path d="M0 0H7L3.5 3.5Z" fill="#111"/></svg>
<div class="a" style="left:574px;top:309px;width:1px;height:25px;background:#b3b7ba;"></div>
<div class="a" style="left:578px;top:314px;width:57px;height:15px;background:#fff;border:1px solid #7a7a7a;"></div>
<div class="t" style="left:579.1px;top:316px;font-size:11.5px;color:#a7a3c4;transform:scaleX(0.9048);">Suchen</div>
<svg class="a" style="left:644px;top:315px" width="16" height="14"><path d="M.5 .5H12.5V8.5H8V12.5H.5Z" fill="#fff"/><path d="M.5 .5H12.5V4.5H.5ZM.5 4.5V12.5H7.6M.5 8.5H7.6M4.5 .5V12.5" fill="none" stroke="#2e3a3c" stroke-width="1.2"/><path d="M7.2 10.4H14.6M11.2 7L14.6 10.4L11.2 13.8" fill="none" stroke="#3a78c8" stroke-width="1.15"/></svg>
<div class="a" style="left:479px;top:336px;width:272px;height:146px;background:#fff;border:1px solid #9a9ea6;"></div>
<div class="t" style="left:482.1px;top:343px;font-size:11.5px;color:#111;transform:scaleX(0.9624);">Datum</div>
<div class="t" style="left:556.7px;top:343px;font-size:11.5px;color:#111;transform:scaleX(0.9662);">Stichwort</div>
<div class="a" style="left:554px;top:337px;width:1px;height:24px;background:#e3e3e3;"></div>
<div class="a" style="left:734px;top:337px;width:1px;height:24px;background:#e3e3e3;"></div>
<div class="a" style="left:736px;top:361px;width:16px;height:122px;background:#f0f0f0;"></div>
<svg class="a" style="left:739px;top:366px" width="9" height="7"><g transform="translate(0 0.2)"><path d="M.8 5.2L4.5 1.4L8.2 5.2" fill="none" stroke="#b8b8b8" stroke-width="1.6"/></g></svg>
<svg class="a" style="left:739px;top:472px" width="9" height="6"><path d="M.8 .8L4.5 4.6L8.2 .8" fill="none" stroke="#b8b8b8" stroke-width="1.6"/></svg>
<div class="a" style="left:763px;top:73px;width:60px;height:18px;background:#e1e1e1;border:1px solid #adadad;"></div>
<div class="t" style="left:766.9px;top:76px;font-size:11.5px;color:#111;transform:scaleX(0.9473);">Externe Nr.</div>
<div class="a" style="left:866px;top:75px;width:165px;height:15px;background:#fff;border:1px solid #7a7a7a;"></div>
<div class="t" style="left:761.6px;top:100px;font-size:11.5px;color:#111;transform:scaleX(0.9592);">Geburtsdatum</div>
<svg class="a" style="left:838px;top:98px" width="14" height="15"><rect x=".6" y="1.6" width="12.8" height="12.8" fill="#f7f3e3" stroke="#2e3a3c" stroke-width="1.2"/><rect x="1.2" y="2.2" width="11.6" height="2.2" fill="#74bfe0"/><path d="M.6 4.5H13.4" stroke="#2e3a3c" stroke-width=".9"/><path d="M3.4 0V2.8M10.6 0V2.8" stroke="#2e3a3c" stroke-width="1.1"/><rect x="2.6" y="6.2" width="8.8" height="6.2" fill="#fff" stroke="#2e3a3c" stroke-width="1.2"/><path d="M2.6 9.3H11.4M5.55 6.2V12.4M8.45 6.2V12.4" fill="none" stroke="#2e3a3c" stroke-width="1.1"/></svg>
<div class="a" style="left:855px;top:98px;width:103px;height:15px;background:#fff;border:1px solid #7a7a7a;"></div>
<svg class="a" style="left:964px;top:99px" width="14" height="13"><g transform="translate(0 0.5)"><path d="M0 1H14M0 6H14M0 11H14" stroke="#333" stroke-width="1.1"/></g></svg>
<div class="t" style="left:761.6px;top:123px;font-size:11.5px;color:#111;transform:scaleX(0.8984);">Erw</div>
<div class="a" style="left:833px;top:121px;width:198px;height:15px;background:#fff;border:1px solid #7a7a7a;"></div>
<div class="t" style="left:1041.9px;top:100px;font-size:11.5px;color:#111;transform:scaleX(0.9446);">Hochzeitstag</div>
<svg class="a" style="left:1112px;top:98px" width="14" height="15"><rect x=".6" y="1.6" width="12.8" height="12.8" fill="#f7f3e3" stroke="#2e3a3c" stroke-width="1.2"/><rect x="1.2" y="2.2" width="11.6" height="2.2" fill="#74bfe0"/><path d="M.6 4.5H13.4" stroke="#2e3a3c" stroke-width=".9"/><path d="M3.4 0V2.8M10.6 0V2.8" stroke="#2e3a3c" stroke-width="1.1"/><rect x="2.6" y="6.2" width="8.8" height="6.2" fill="#fff" stroke="#2e3a3c" stroke-width="1.2"/><path d="M2.6 9.3H11.4M5.55 6.2V12.4M8.45 6.2V12.4" fill="none" stroke="#2e3a3c" stroke-width="1.1"/></svg>
<div class="a" style="left:1129px;top:98px;width:103px;height:15px;background:#fff;border:1px solid #7a7a7a;"></div>
<svg class="a" style="left:1238px;top:99px" width="14" height="13"><g transform="translate(0 0.5)"><path d="M0 1H14M0 6H14M0 11H14" stroke="#333" stroke-width="1.1"/></g></svg>
<div class="t" style="left:1041.9px;top:123px;font-size:11.5px;color:#111;transform:scaleX(0.9465);">Kind</div>
<div class="a" style="left:1107px;top:121px;width:204px;height:15px;background:#fff;border:1px solid #7a7a7a;"></div>
<div class="a" style="left:762px;top:143px;width:270px;height:21px;background:#CBEAF2;"></div>
<svg class="a" style="left:764px;top:146px" width="16" height="18"><g transform="translate(0 0.3)"><path d="M8.00 0.76L9.97 5.07L14.37 5.76L11.19 9.12L11.94 13.85L8.00 11.62L4.06 13.85L4.81 9.12L1.63 5.76L6.03 5.07Z" fill="#fcd480" stroke="#2e3a3c" stroke-width="1.1" stroke-linejoin="miter"/></g></svg>
<div class="t" style="left:783.7px;top:148px;font-size:11.5px;color:#111;transform:scaleX(0.9920);">Wichtig</div>
<svg class="a" style="left:1014px;top:146px" width="16" height="16"><path d="M6.4 9.4L1 14.2" stroke="#333" stroke-width="3" stroke-linecap="round"/><path d="M6.2 9.6L1.2 14" stroke="#e4e4e0" stroke-width="1.2" stroke-linecap="round"/><circle cx="9.5" cy="5.5" r="5" fill="#fbfdfa" stroke="#2e3a3c" stroke-width="1.1"/><path d="M6.2 5.5H12.8M9.5 2.2V8.8" stroke="#2e3a3c" stroke-width="1.1"/></svg>
<div class="a" style="left:762px;top:164px;width:268px;height:315px;background:#fff;border:1px solid #7a7a7a;"></div>
<div class="a" style="left:1015px;top:166px;width:15px;height:313px;background:#f0f0f0;"></div>
<svg class="a" style="left:1018px;top:171px" width="9" height="6"><path d="M.8 5.2L4.5 1.4L8.2 5.2" fill="none" stroke="#b8b8b8" stroke-width="1.6"/></svg>
<svg class="a" style="left:1018px;top:470px" width="9" height="6"><path d="M.8 .8L4.5 4.6L8.2 .8" fill="none" stroke="#b8b8b8" stroke-width="1.6"/></svg>
<div class="a" style="left:1041px;top:143px;width:271px;height:21px;background:#CBEAF2;"></div>
<svg class="a" style="left:1044px;top:146px" width="16" height="18"><g transform="translate(0 0.3)"><path d="M8.00 0.76L9.97 5.07L14.37 5.76L11.19 9.12L11.94 13.85L8.00 11.62L4.06 13.85L4.81 9.12L1.63 5.76L6.03 5.07Z" fill="#fcd480" stroke="#2e3a3c" stroke-width="1.1" stroke-linejoin="miter"/></g></svg>
<div class="t" style="left:1062.7px;top:148px;font-size:11.5px;color:#111;transform:scaleX(0.9675);">Bemerkung</div>
<svg class="a" style="left:1294px;top:146px" width="16" height="16"><path d="M6.4 9.4L1 14.2" stroke="#333" stroke-width="3" stroke-linecap="round"/><path d="M6.2 9.6L1.2 14" stroke="#e4e4e0" stroke-width="1.2" stroke-linecap="round"/><circle cx="9.5" cy="5.5" r="5" fill="#fbfdfa" stroke="#2e3a3c" stroke-width="1.1"/><path d="M6.2 5.5H12.8M9.5 2.2V8.8" stroke="#2e3a3c" stroke-width="1.1"/></svg>
<div class="a" style="left:1041px;top:164px;width:269px;height:315px;background:#fff;border:1px solid #7a7a7a;"></div>
<div class="a" style="left:1295px;top:166px;width:15px;height:313px;background:#f0f0f0;"></div>
<svg class="a" style="left:1298px;top:171px" width="9" height="6"><path d="M.8 5.2L4.5 1.4L8.2 5.2" fill="none" stroke="#b8b8b8" stroke-width="1.6"/></svg>
<svg class="a" style="left:1298px;top:470px" width="9" height="6"><path d="M.8 .8L4.5 4.6L8.2 .8" fill="none" stroke="#b8b8b8" stroke-width="1.6"/></svg>
<div class="a" style="left:168px;top:488px;width:1153px;height:2px;background:#fdfdfd;"></div>
<div class="a" style="left:168px;top:490px;width:1153px;height:1px;background:#a2a2a2;"></div>
<div class="a" style="left:169px;top:492px;width:112px;height:25px;background:#fff;"></div>
<div class="a" style="left:281px;top:494px;width:78px;height:23px;background:#f0f0f0;"></div>
<svg class="a" style="left:173px;top:498px" width="17" height="14"><g transform="translate(0.5 0.5)"><path d="M9.4 .6H12.6C13.6 .6 14 1.4 14 2.4V5C14 6.2 13.4 6.8 12.8 7.2V8.4L15.4 9.6V12.2H9.8" fill="#fff" stroke="#333" stroke-width="1" stroke-linejoin="round"/><path d="M4.2 .6H7.8C8.8 .6 9.2 1.4 9.2 2.4V5C9.2 6.2 8.6 6.8 8 7.2V8.4L11.4 9.8V12.4H.6V9.8L4 8.4V7.2C3.4 6.8 2.8 6.2 2.8 5V2.4C2.8 1.4 3.2 .6 4.2 .6Z" fill="#fff" stroke="#333" stroke-width="1" stroke-linejoin="round"/></g></svg>
<div class="t" style="left:193.9px;top:498px;font-size:11.5px;color:#111;transform:scaleX(0.9538);">Ansprechpartner</div>
<svg class="a" style="left:284px;top:500px" width="16" height="10"><rect x=".5" y="3.5" width="15" height="3" fill="#e4e4e0" stroke="#2e3a3c" stroke-width="1"/><rect x="2.5" y=".6" width="6" height="8.8" fill="#f7b6c2" stroke="#d0102c" stroke-width="1.2"/></svg>
<div class="t" style="left:303.1px;top:500px;font-size:11.5px;color:#111;transform:scaleX(0.9803);">Nicht aktiv</div>
<div class="a" style="left:168px;top:517px;width:1153px;height:31px;background:#CBEAF2;"></div>
<svg class="a" style="left:178px;top:526px" width="13" height="13"><path d="M5.5 .5H7.5V5.5H12.5V7.5H7.5V12.5H5.5V7.5H.5V5.5H5.5Z" fill="#bfe5c4" stroke="#3bab55" stroke-width="1"/></svg>
<svg class="a" style="left:197px;top:531px" width="8" height="4"><g transform="translate(0.5 0)"><path d="M0 0H7L3.5 3.5Z" fill="#111"/></g></svg>
<svg class="a" style="left:211px;top:527px" width="16" height="10"><rect x=".5" y="3.5" width="15" height="3" fill="#e4e4e0" stroke="#2e3a3c" stroke-width="1"/><rect x="2.5" y=".6" width="6" height="8.8" fill="#f7b6c2" stroke="#d0102c" stroke-width="1.2"/></svg>
<div class="a" style="left:232px;top:520px;width:1px;height:24px;background:#b3b7ba;"></div>
<svg class="a" style="left:242px;top:525px" width="16" height="14"><g transform="translate(0.6 0)"><rect x="3.5" y=".6" width="8" height="3.6" fill="#f7f3e3" stroke="#2e3a3c" stroke-width="1.1"/><rect x=".6" y="4" width="13.8" height="6.4" rx="1.2" fill="#b4bcbe" stroke="#2e3a3c" stroke-width="1.1"/><rect x="3.5" y="7.6" width="8" height="5.8" fill="#f7f3e3" stroke="#2e3a3c" stroke-width="1.1"/><path d="M5.4 10.5H9.6" stroke="#2e3a3c" stroke-width="1.1"/></g></svg>
<svg class="a" style="left:263px;top:531px" width="8" height="4"><g transform="translate(0.5 0)"><path d="M0 0H7L3.5 3.5Z" fill="#111"/></g></svg>
<svg class="a" style="left:279px;top:526px" width="14" height="13"><rect x=".6" y=".6" width="12.8" height="11.6" fill="#fff" stroke="#333" stroke-width="1.1"/><path d="M.6 4.4H13.4M.6 8.2H13.4M4.4 .6V12.2" stroke="#333" stroke-width="1"/></svg>
<svg class="a" style="left:296px;top:529px" width="8" height="4"><g transform="translate(0.5 0.5)"><path d="M0 0H7L3.5 3.5Z" fill="#111"/></g></svg>
<div class="a" style="left:308px;top:520px;width:1px;height:24px;background:#b3b7ba;"></div>
<div class="a" style="left:312px;top:525px;width:57px;height:15px;background:#fff;border:1px solid #7a7a7a;"></div>
<div class="t" style="left:312.9px;top:526px;font-size:11.5px;color:#a7a3c4;transform:scaleX(0.9048);">Suchen</div>
<svg class="a" style="left:378px;top:526px" width="16" height="14"><path d="M.5 .5H12.5V8.5H8V12.5H.5Z" fill="#fff"/><path d="M.5 .5H12.5V4.5H.5ZM.5 4.5V12.5H7.6M.5 8.5H7.6M4.5 .5V12.5" fill="none" stroke="#2e3a3c" stroke-width="1.2"/><path d="M7.2 10.4H14.6M11.2 7L14.6 10.4L11.2 13.8" fill="none" stroke="#3a78c8" stroke-width="1.15"/></svg>
<div class="a" style="left:398px;top:520px;width:1px;height:24px;background:#b3b7ba;"></div>
<svg class="a" style="left:408px;top:524px" width="17" height="15"><rect x="0.1" y="0.1" width="5" height="2.8" fill="#2e3a3c"/><rect x="1.1" y="0.95" width="3" height="1.1" fill="#f6c452"/><rect x="0.1" y="4.2" width="5" height="2.8" fill="#2e3a3c"/><rect x="1.1" y="5.05" width="3" height="1.1" fill="#6fa0dc"/><rect x="0.1" y="8.2" width="5" height="2.8" fill="#2e3a3c"/><rect x="1.1" y="9.049999999999999" width="3" height="1.1" fill="#f6c452"/><rect x="0.1" y="12.1" width="5" height="2.8" fill="#2e3a3c"/><rect x="1.1" y="12.95" width="3" height="1.1" fill="#6fa0dc"/><path d="M6.9 6.1L9 7.5L6.9 8.9Z" fill="#2e3a3c"/><rect x="11" y="4.2" width="5" height="2.8" fill="#2e3a3c"/><rect x="12" y="5.05" width="3" height="1.1" fill="#6fa0dc"/><rect x="11" y="8.2" width="5" height="2.8" fill="#2e3a3c"/><rect x="12" y="9.049999999999999" width="3" height="1.1" fill="#f6c452"/></svg>
<div class="t" style="left:426.3px;top:526px;font-size:11.5px;color:#111;transform:scaleX(0.9351);">Zusammenlegen</div>
<div class="a" style="left:168px;top:548px;width:1137px;height:352px;background:#fff;"></div>
<div class="a" style="left:1305px;top:548px;width:16px;height:24px;background:#fff;"></div>
<div class="a" style="left:168px;top:551px;width:1131px;height:36px;overflow:hidden">
<div class="a" style="left:22px;top:0;width:1px;height:40px;background:#e0e0e0"></div>
<div class="a" style="left:132px;top:0;width:1px;height:40px;background:#e0e0e0"></div>
<div class="a" style="left:222px;top:0;width:1px;height:40px;background:#e0e0e0"></div>
<div class="a" style="left:272px;top:0;width:1px;height:40px;background:#e0e0e0"></div>
<div class="a" style="left:322px;top:0;width:1px;height:40px;background:#e0e0e0"></div>
<div class="a" style="left:372px;top:0;width:1px;height:40px;background:#e0e0e0"></div>
<div class="a" style="left:477px;top:0;width:1px;height:40px;background:#e0e0e0"></div>
<div class="a" style="left:582px;top:0;width:1px;height:40px;background:#e0e0e0"></div>
<div class="a" style="left:687px;top:0;width:1px;height:40px;background:#e0e0e0"></div>
<div class="a" style="left:848px;top:0;width:1px;height:40px;background:#e0e0e0"></div>
<div class="a" style="left:948px;top:0;width:1px;height:40px;background:#e0e0e0"></div>
<div class="a" style="left:1086px;top:0;width:1px;height:40px;background:#e0e0e0"></div>
</div>
<div class="a" style="left:0;top:0;width:1299px;height:587px;overflow:hidden">
<div class="t" style="left:192.8px;top:554px;font-size:11.5px;color:#111;transform:scaleX(0.9384);">Nachname</div>
<div class="t" style="left:192.8px;top:575px;font-size:11.5px;color:#111;transform:scaleX(0.9680);">Filbinger</div>
<div class="t" style="left:302.8px;top:554px;font-size:11.5px;color:#111;transform:scaleX(0.9428);">Vorname</div>
<div class="t" style="left:302.8px;top:575px;font-size:11.5px;color:#111;transform:scaleX(0.9018);">Luise</div>
<div class="t" style="left:392.8px;top:554px;font-size:11.5px;color:#111;transform:scaleX(0.9597);">Anrede</div>
<div class="t" style="left:392.8px;top:575px;font-size:11.5px;color:#111;transform:scaleX(0.8962);">Frau</div>
<div class="t" style="left:442.8px;top:554px;font-size:11.5px;color:#111;transform:scaleX(0.9900);">Titel</div>
<div class="t" style="left:492.8px;top:554px;font-size:11.5px;color:#111;transform:scaleX(0.9517);">Titel 2</div>
<div class="t" style="left:542.8px;top:554px;font-size:11.5px;color:#111;transform:scaleX(0.9328);">Telefon</div>
<div class="t" style="left:647.8px;top:554px;font-size:11.5px;color:#111;transform:scaleX(1.0406);">Mobil</div>
<div class="t" style="left:752.8px;top:554px;font-size:11.5px;color:#111;transform:scaleX(0.8189);">Fax</div>
<div class="t" style="left:857.8px;top:554px;font-size:11.5px;color:#111;transform:scaleX(0.9419);">E-Mail</div>
<div class="t" style="left:857.8px;top:575px;font-size:11.5px;color:#111;transform:scaleX(0.9686);">l.filbinger@tulpentraum.de</div>
<div class="t" style="left:1018.8px;top:554px;font-size:11.5px;color:#111;transform:scaleX(0.9386);">Funktion</div>
<div class="t" style="left:1118.8px;top:554px;font-size:11.5px;color:#111;transform:scaleX(0.9148);">Briefanrede</div>
<div class="t" style="left:1118.8px;top:575px;font-size:11.5px;color:#111;transform:scaleX(0.9236);">Sehr geehrte Frau Filbinger</div>
<div class="t" style="left:1256.8px;top:554px;font-size:11.5px;color:#111;transform:scaleX(0.9688);">Geburtsdatum</div>
</div>
<div class="a" style="left:171px;top:574px;width:11px;height:11px;background:#fff;border:1px solid #333;"></div>
<svg class="a" style="left:171px;top:574px" width="13" height="13"><path d="M2.5 6.5L5 9.5L10.5 3" fill="none" stroke="#222" stroke-width="1.2"/></svg>
<div class="a" style="left:168px;top:590px;width:1137px;height:1px;background:#8a8a8a;"></div>
<div class="a" style="left:168px;top:548px;width:1128px;height:36px;border:3px solid #FF8000;"></div>
<div class="a" style="left:168px;top:522px;width:26px;height:20px;border:3px solid #FF8000;"></div>
<div class="a" style="left:1305px;top:572px;width:16px;height:328px;background:#f0f0f0;"></div>
<svg class="a" style="left:1308px;top:578px" width="10" height="6"><g transform="translate(0.5 0)"><path d="M.8 5.2L4.5 1.4L8.2 5.2" fill="none" stroke="#b8b8b8" stroke-width="1.6"/></g></svg>
<svg class="a" style="left:1308px;top:889px" width="10" height="6"><g transform="translate(0.5 0)"><path d="M.8 .8L4.5 4.6L8.2 .8" fill="none" stroke="#b8b8b8" stroke-width="1.6"/></g></svg>
<div class="a" style="left:168px;top:900px;width:1153px;height:16px;background:#f0f0f0;"></div>
<div class="a" style="left:185px;top:900px;width:1070px;height:16px;background:#cdcdcd;"></div>
<svg class="a" style="left:173px;top:903px" width="8" height="10"><path d="M6.5 1L2 5L6.5 9" fill="none" stroke="#444" stroke-width="2"/></svg>
<svg class="a" style="left:1293px;top:903px" width="8" height="10"><path d="M1.5 1L6 5L1.5 9" fill="none" stroke="#444" stroke-width="2"/></svg>
<div class="a" style="left:0px;top:0px;width:1322px;height:1px;background:#3c3c3c;"></div>
<div class="a" style="left:0px;top:916px;width:1322px;height:1px;background:#3c3c3c;"></div>
<div class="a" style="left:0px;top:0px;width:1px;height:917px;background:#3c3c3c;"></div>
<div class="a" style="left:1321px;top:0px;width:1px;height:917px;background:#3c3c3c;"></div>
</body></html>
